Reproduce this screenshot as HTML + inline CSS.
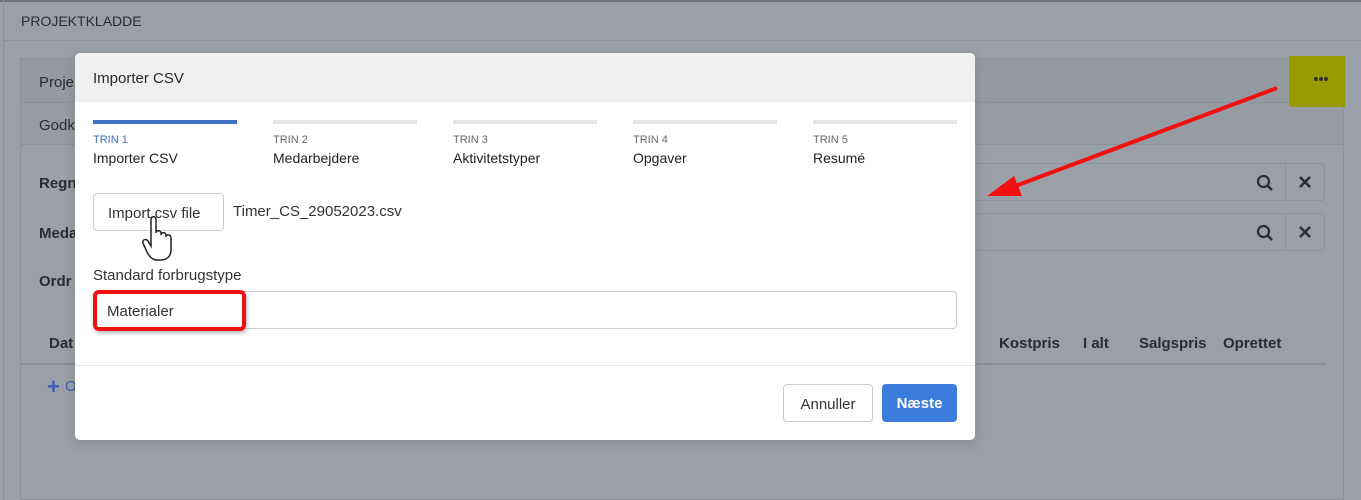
<!DOCTYPE html>
<html><head><meta charset="utf-8"><style>
*{box-sizing:border-box;margin:0;padding:0}
body{width:1361px;height:500px;overflow:hidden;background:#9b9fa7;font-family:"Liberation Sans",sans-serif;position:relative;color:#222}
.a{position:absolute}
.bg-t{font-size:14px;color:#2a2d33}
.b{font-weight:bold;font-size:15px;color:#2a2d33}
</style></head><body>
<div class="a" style="left:0;top:0;width:1361px;height:2px;background:#6f737a"></div>
<div class="a" style="left:3px;top:0;width:1px;height:500px;background:#8d9199"></div>
<div class="a bg-t" style="left:21px;top:13px;font-size:14px">PROJEKTKLADDE</div>
<div class="a" style="left:4px;top:40px;width:1357px;height:1px;background:#8d9199"></div>
<div class="a" style="left:20px;top:58px;width:1324px;height:442px;border:1px solid #8d9199;background:#9b9fa7"></div>
<div class="a" style="left:21px;top:59px;width:1322px;height:44px;background:#959aa2;border-bottom:1px solid #8d9199"></div>
<div class="a" style="left:21px;top:103px;width:1322px;height:42px;background:#979ba3;border-bottom:1px solid #8d9199"></div>
<div class="a bg-t" style="left:39px;top:74px;font-size:15px">Proje</div>
<div class="a bg-t" style="left:39px;top:117px;font-size:15px">Godk</div>
<div class="a b" style="left:39px;top:175px">Regn</div>
<div class="a b" style="left:39px;top:225px">Meda</div>
<div class="a b" style="left:39px;top:273px">Ordr</div>
<div class="a b" style="left:49px;top:335px">Dat</div>
<div class="a" style="left:20px;top:363px;width:1306px;height:2px;background:#8a8e96"></div>
<div class="a" style="left:47px;top:374px;color:#3d5fae;font-size:22px;font-weight:bold">+</div>
<div class="a" style="left:65px;top:378px;color:#3d5fae;font-size:15px">O</div>
<div class="a" style="left:960px;top:163px;width:365px;height:38px;border:1px solid #8d9199;border-radius:4px"></div>
<div class="a" style="left:1285px;top:163px;width:1px;height:38px;background:#8d9199"></div>
<div class="a" style="left:960px;top:213px;width:365px;height:38px;border:1px solid #8d9199;border-radius:4px"></div>
<div class="a" style="left:1285px;top:213px;width:1px;height:38px;background:#8d9199"></div>
<svg class="a" style="left:1256px;top:174px" width="18" height="18"><circle cx="7.5" cy="7.5" r="5.5" fill="none" stroke="#2a2d33" stroke-width="2.2"/><line x1="11.5" y1="11.5" x2="16" y2="16" stroke="#2a2d33" stroke-width="2.6"/></svg>
<svg class="a" style="left:1256px;top:224px" width="18" height="18"><circle cx="7.5" cy="7.5" r="5.5" fill="none" stroke="#2a2d33" stroke-width="2.2"/><line x1="11.5" y1="11.5" x2="16" y2="16" stroke="#2a2d33" stroke-width="2.6"/></svg>
<svg class="a" style="left:1299px;top:176px" width="12" height="12"><path d="M1 1L11 11M11 1L1 11" stroke="#2a2d33" stroke-width="2.6"/></svg>
<svg class="a" style="left:1299px;top:226px" width="12" height="12"><path d="M1 1L11 11M11 1L1 11" stroke="#2a2d33" stroke-width="2.6"/></svg>
<div class="a b" style="left:999px;top:335px">Kostpris</div>
<div class="a b" style="left:1083px;top:335px">I alt</div>
<div class="a b" style="left:1139px;top:335px">Salgspris</div>
<div class="a b" style="left:1223px;top:335px">Oprettet</div>
<div class="a" style="left:1289px;top:56px;width:56px;height:51px;background:#999a00"></div>
<svg class="a" style="left:1313px;top:76px" width="16" height="6"><circle cx="3" cy="3" r="2" fill="#333"/><circle cx="8" cy="3" r="2" fill="#333"/><circle cx="13" cy="3" r="2" fill="#333"/></svg>
<svg class="a" style="left:0;top:0" width="1361" height="500"><line x1="1277" y1="88" x2="1010" y2="188" stroke="#f01010" stroke-width="4"/><polygon points="987,196 1014,176 1022,196" fill="#f01010"/></svg>

<div class="a" style="left:75px;top:53px;width:900px;height:387px;background:#fff;border-radius:5px;overflow:hidden;box-shadow:0 3px 12px rgba(0,0,0,.15)">
<div class="a" style="left:0;top:0;width:900px;height:49px;background:#f0f0f0"></div>
<div class="a" style="left:18px;top:17px;font-size:15px;color:#2a2a2a">Importer CSV</div>
<div class="a" style="left:18px;top:67px;width:144px;height:4px;background:#3f6fc0"></div>
<div class="a" style="left:198px;top:67px;width:144px;height:4px;background:#e5e5e5"></div>
<div class="a" style="left:378px;top:67px;width:144px;height:4px;background:#e5e5e5"></div>
<div class="a" style="left:558px;top:67px;width:144px;height:4px;background:#e5e5e5"></div>
<div class="a" style="left:738px;top:67px;width:144px;height:4px;background:#e5e5e5"></div>
<div class="a" style="left:18px;top:81px;font-size:11px;color:#3f6fc0">TRIN 1</div>
<div class="a" style="left:198px;top:81px;font-size:11px;color:#666">TRIN 2</div>
<div class="a" style="left:378px;top:81px;font-size:11px;color:#666">TRIN 3</div>
<div class="a" style="left:558px;top:81px;font-size:11px;color:#666">TRIN 4</div>
<div class="a" style="left:738px;top:81px;font-size:11px;color:#666">TRIN 5</div>
<div class="a" style="left:18px;top:97px;font-size:14px;color:#222">Importer CSV</div>
<div class="a" style="left:198px;top:97px;font-size:14px;color:#222">Medarbejdere</div>
<div class="a" style="left:378px;top:97px;font-size:14px;color:#222">Aktivitetstyper</div>
<div class="a" style="left:558px;top:97px;font-size:14px;color:#222">Opgaver</div>
<div class="a" style="left:738px;top:97px;font-size:14px;color:#222">Resumé</div>
<div class="a" style="left:18px;top:140px;width:131px;height:38px;border:1px solid #ccc;border-radius:4px;font-size:15px;color:#333;padding:11px 0 0 14px">Import csv file</div>
<div class="a" style="left:158px;top:150px;font-size:15px;color:#333">Timer_CS_29052023.csv</div>
<svg class="a" style="left:66px;top:162px" width="36" height="50"><path d="M10 4c0-3 5-3 5 0v14c0-3 5-3 5 0v2c0-3 5-3 5 0v2c0-3 5-3 5 1v12c0 6-4 10-10 10h-4c-5 0-8-4-10-8l-4-9c-1-3 3-5 5-2l3 5z" fill="#fff" stroke="#222" stroke-width="1.5"/></svg>
<div class="a" style="left:18px;top:214px;font-size:15px;color:#333">Standard forbrugstype</div>
<div class="a" style="left:18px;top:238px;width:864px;height:38px;border:1px solid #ccc;border-radius:4px"></div>
<div class="a" style="left:18px;top:237px;width:153px;height:41px;border:4px solid #ee1111;border-radius:6px;box-shadow:1px 2px 4px rgba(0,0,0,.3)"></div>
<div class="a" style="left:32px;top:250px;font-size:15px;color:#333">Materialer</div>
<div class="a" style="left:0;top:312px;width:900px;height:1px;background:#e5e5e5"></div>
<div class="a" style="left:708px;top:331px;width:90px;height:38px;border:1px solid #ccc;border-radius:4px;font-size:15px;color:#333;text-align:center;padding-top:11px">Annuller</div>
<div class="a" style="left:807px;top:331px;width:75px;height:38px;background:#3b7ddd;border-radius:4px;font-size:15px;color:#fff;font-weight:bold;text-align:center;padding-top:11px">Næste</div>
</div>
</body></html>
